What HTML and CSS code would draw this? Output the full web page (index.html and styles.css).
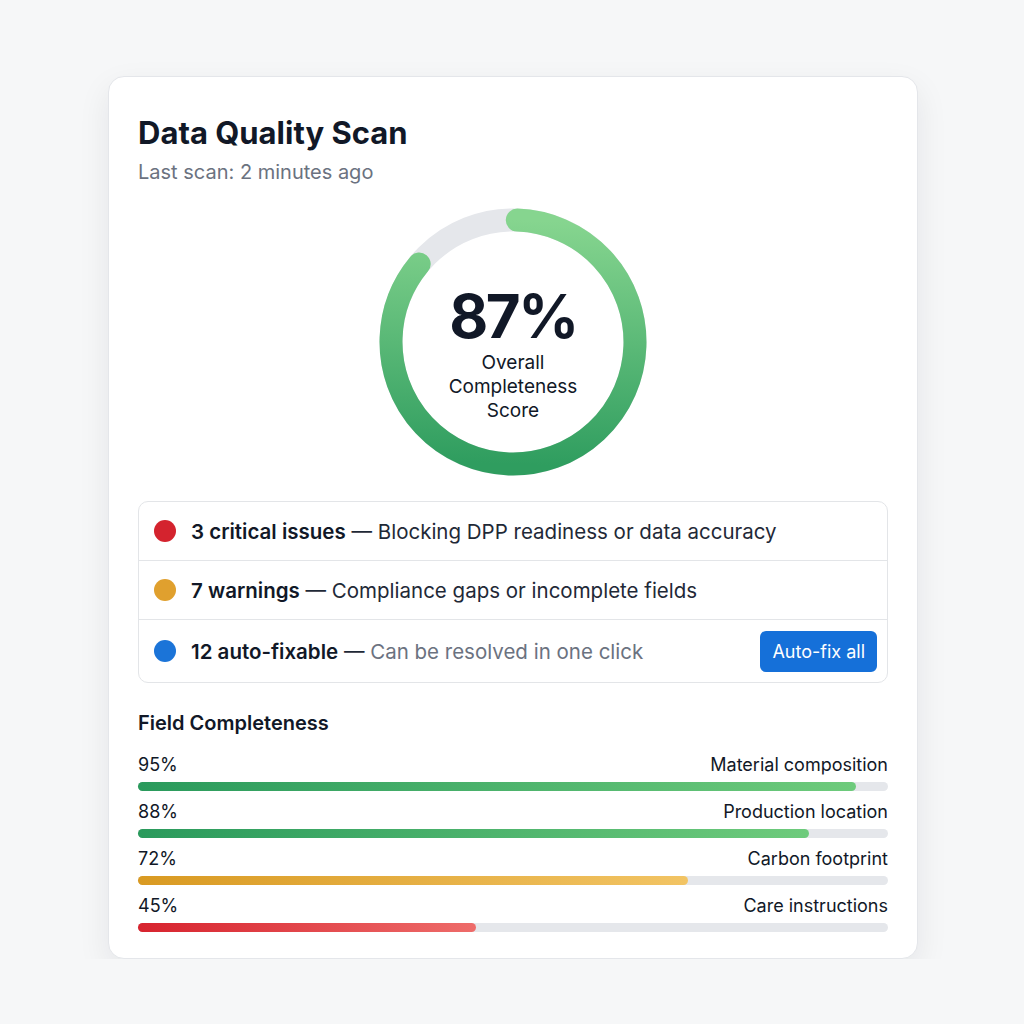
FILE: index.html
```html
<!DOCTYPE html>
<html>
<head>
  <title>Data Quality Scan</title>
  <link rel="stylesheet" href="styles.css">
</head>
<body>
  <div class="card">
    <h1>Data Quality Scan</h1>
    <p class="subtitle">Last scan: 2 minutes ago</p>

    <div class="score">
      <svg class="ring" width="268" height="268" viewBox="0 0 268 268">
        <defs>
          <!-- ring is rotated -88deg, so local x runs bottom -> top -->
          <linearGradient id="ringGrad" x1="1" y1="0" x2="0" y2="0">
            <stop offset="0" stop-color="#86d58f"/>
            <stop offset="1" stop-color="#2f9d5f"/>
          </linearGradient>
        </defs>
        <circle cx="134" cy="134" r="122" fill="none" stroke="#e5e7eb" stroke-width="23"/>
        <circle cx="134" cy="134" r="122" fill="none" stroke="url(#ringGrad)" stroke-width="23"
                stroke-linecap="round" stroke-dasharray="655 800" transform="rotate(-88 134 134)"/>
      </svg>
      <div class="score-text">
        <div class="score-value">87%</div>
        <div class="score-label">Overall<br>Completeness<br>Score</div>
      </div>
    </div>

    <div class="issues">
      <div class="issue">
        <span class="dot red"></span>
        <span class="issue-text"><b>3 critical issues</b> — Blocking DPP readiness or data accuracy</span>
      </div>
      <div class="issue">
        <span class="dot amber"></span>
        <span class="issue-text"><b>7 warnings</b> — Compliance gaps or incomplete fields</span>
      </div>
      <div class="issue">
        <span class="dot blue"></span>
        <span class="issue-text"><b>12 auto-fixable</b> — <span class="muted">Can be resolved in one click</span></span>
        <button class="fix-btn">Auto-fix all</button>
      </div>
    </div>

    <h2>Field Completeness</h2>
    <div class="fields">
      <div class="field">
        <div class="field-head"><span>95%</span><span>Material composition</span></div>
        <div class="track"><div class="fill green" style="width: 95.7%"></div></div>
      </div>
      <div class="field">
        <div class="field-head"><span>88%</span><span>Production location</span></div>
        <div class="track"><div class="fill green" style="width: 89.5%"></div></div>
      </div>
      <div class="field">
        <div class="field-head"><span>72%</span><span>Carbon footprint</span></div>
        <div class="track"><div class="fill amber" style="width: 73.3%"></div></div>
      </div>
      <div class="field">
        <div class="field-head"><span>45%</span><span>Care instructions</span></div>
        <div class="track"><div class="fill red" style="width: 45%"></div></div>
      </div>
    </div>
  </div>
</body>
</html>
```

FILE: styles.css
```css
body {
  margin: 0;
  padding: 76px 0 0 108px;
  background: #f6f7f8;
  font-family: Inter, "Noto Sans", sans-serif;
  color: #111827;
}
.card {
  width: 750px;
  padding: 36px 29px 26px;
  background: #fff;
  border: 1px solid #e4e6ea;
  border-radius: 16px;
  box-shadow: 0 12px 32px rgba(17, 24, 39, 0.08);
}
h1 {
  margin: 0;
  font-size: 31px;
  line-height: 40px;
  font-weight: 700;
  color: #111827;
}
.subtitle {
  margin: 6px 0 0;
  font-size: 20px;
  line-height: 26px;
  color: #6b7280;
}
.score {
  display: grid;
  justify-items: center;
  align-items: center;
  margin-top: 23px;
}
.ring, .score-text {
  grid-area: 1 / 1;
}
.score-text {
  text-align: center;
  padding-top: 23px;
}
.score-value {
  font-size: 60px;
  line-height: 64px;
  font-weight: 700;
  color: #111827;
  letter-spacing: -2.5px;
}
.score-label {
  font-size: 19px;
  line-height: 24px;
  color: #111827;
  margin-top: 3px;
}
.issues {
  margin-top: 25px;
  border: 1px solid #e3e5e8;
  border-radius: 10px;
}
.issue {
  display: flex;
  align-items: center;
  height: 58px;
  padding: 0 10px 0 15px;
  font-size: 20.5px;
  color: #1f2937;
}
.issue + .issue {
  border-top: 1px solid #e3e5e8;
}
.issue:last-child {
  height: 62px;
}
.issue b {
  font-weight: 600;
  color: #111827;
}
.muted {
  color: #6b7280;
}
.dot {
  width: 22px;
  height: 22px;
  border-radius: 50%;
  margin-right: 15px;
  flex: none;
}
.dot.red { background: #d4232e; }
.dot.amber { background: #e0a02e; }
.dot.blue { background: #1b74d8; }
.issue-text {
  flex: 1;
}
.fix-btn {
  background: #1570d9;
  color: #fff;
  border: none;
  border-radius: 6px;
  padding: 0 12px;
  height: 41px;
  font-family: inherit;
  font-size: 18px;
  cursor: pointer;
}
h2 {
  margin: 27px 0 0;
  font-size: 20px;
  line-height: 26px;
  font-weight: 600;
  color: #111827;
}
.fields {
  margin-top: 18px;
  display: flex;
  flex-direction: column;
  gap: 10px;
}
.field-head {
  display: flex;
  justify-content: space-between;
  font-size: 18px;
  line-height: 22px;
  color: #111827;
}
.track {
  margin-top: 6px;
  height: 9px;
  background: #e5e7eb;
  border-radius: 5px;
}
.fill {
  height: 100%;
  border-radius: 5px;
}
.fill.green { background: linear-gradient(90deg, #2a9a5c, #6ecb7c); }
.fill.amber { background: linear-gradient(90deg, #d99a22, #f2c464); }
.fill.red { background: linear-gradient(90deg, #d7232e, #ee6c6a); }
```
